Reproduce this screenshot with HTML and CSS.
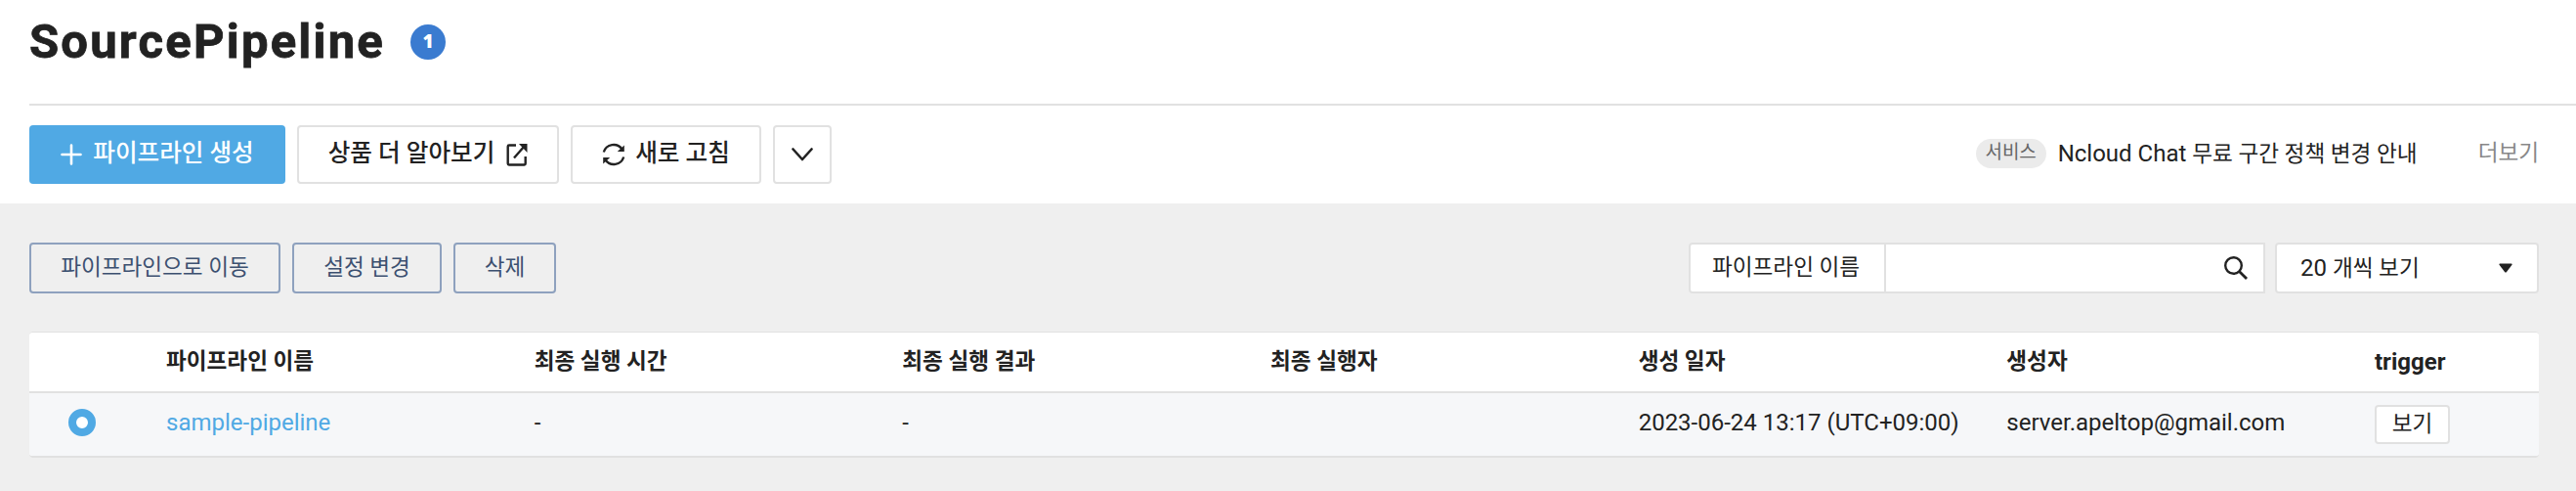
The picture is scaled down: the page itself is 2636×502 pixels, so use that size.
FILE: index.html
```html
<!DOCTYPE html>
<html lang="ko">
<head>
<meta charset="utf-8">
<title>SourcePipeline</title>
<link rel="stylesheet" href="styles.css">
</head>
<body>
<header class="header">
  <div class="title-row">
    <h1 class="title">SourcePipeline</h1>
    <span class="count">1</span>
  </div>
  <div class="toolbar">
    <button class="btn btn-primary"><svg width="22" height="22" viewBox="0 0 22 22"><path d="M11 1.500v19M1.500 11h19" stroke="currentColor" stroke-width="2.600" stroke-linecap="round"/></svg><span>파이프라인 생성</span></button>
    <button class="btn btn-learn"><span>상품 더 알아보기</span><svg width="22" height="24" viewBox="0 0 22 24" fill="none" stroke="currentColor" stroke-width="2.400"><path d="M10 2.500H3Q1.700 2.500 1.700 3.700V21.300q0 1.200 1.200 1.200H18.500q1.200 0 1.200-1.200V14M8 15.500L19 3"/><path d="M13 1h8.500v9z" fill="currentColor" stroke="none"/></svg></button>
    <button class="btn btn-refresh"><svg width="24" height="26" viewBox="0 0 24 26" fill="none" stroke="currentColor" stroke-width="2.400"><path d="M1.800 10.500A10.500 10.500 0 0 1 20.500 7.500M22.200 15.500A10.500 10.500 0 0 1 3.500 18.500"/><path d="M22.800 3.500v6.500h-7zM1.200 22.500V16h7z" fill="currentColor" stroke="none"/></svg><span>새로 고침</span></button>
    <button class="btn btn-more" aria-label="more"><svg width="22" height="14" viewBox="0 0 22 14" fill="none" stroke="currentColor" stroke-width="2.600"><path d="M1.500 1.500L11 12L20.500 1.500" stroke-linejoin="round" stroke-linecap="round"/></svg></button>
    <div class="notice">
      <span class="tag">서비스</span>
      <span class="notice-text">Ncloud Chat <span class="ko">무료 구간 정책 변경 안내</span></span>
      <a class="notice-more ko">더보기</a>
    </div>
  </div>
</header>
<main class="content">
  <div class="filters">
    <button class="action action-move ko">파이프라인으로 이동</button>
    <button class="action action-edit ko">설정 변경</button>
    <button class="action action-delete ko">삭제</button>
    <div class="search">
      <span class="search-label ko">파이프라인 이름</span>
      <span class="search-field"><svg width="24" height="24" viewBox="0 0 24 24" fill="none" stroke="currentColor" stroke-width="2.400"><circle cx="9.500" cy="9.500" r="8.300"/><path d="M15.200 15.200L23 23" stroke-width="2.800"/></svg></span>
    </div>
    <div class="select"><span>20 <span class="ko">개씩 보기</span></span><svg width="14" height="10" viewBox="0 0 14 10"><path d="M1 .5h12q1 .2.500 1.200L8 9q-1 1-2 0L.5 1.700Q0 .7 1 .5z" fill="currentColor"/></svg></div>
  </div>
  <div class="table">
    <div class="row head ko">
      <span></span><span>파이프라인 이름</span><span>최종 실행 시간</span><span>최종 실행 결과</span><span>최종 실행자</span><span>생성 일자</span><span>생성자</span><span class="latin">trigger</span>
    </div>
    <div class="row item">
      <span class="radio"></span><a class="cell link">sample-pipeline</a><span class="cell">-</span><span class="cell">-</span><span class="cell"></span><span class="cell">2023-06-24 13:17 (UTC+09:00)</span><span class="cell">server.apeltop@gmail.com</span><span><button class="view ko">보기</button></span>
    </div>
  </div>
</main>
</body>
</html>
```
FILE: styles.css
```css
* { box-sizing: border-box; }
body {
  margin: 0;
  min-height: 502px;
  background: #efefef;
  color: #222;
  font: 24px/1 Roboto, "Noto Sans CJK KR", sans-serif;
}
button {
  font: inherit;
  color: inherit;
  padding: 0;
  white-space: nowrap;
}
svg { display: block; flex: none; }
.ko { font-size: 22.6px; }
.latin { font-size: 24px; }

.header { height: 208px; padding: 0 0 0 30px; background: #fff; }
.title-row {
  display: flex;
  align-items: center;
  height: 108px;
  padding-bottom: 20px;
  border-bottom: 2px solid #e1e1e1;
}
.title {
  width: 390px;
  margin: 0;
  padding-bottom: 1px;
  font-size: 49px;
  font-weight: 700;
  letter-spacing: 2.200px;
  -webkit-text-stroke: .8px currentColor;
}
.count {
  width: 36px;
  height: 36px;
  border-radius: 50%;
  background: #3a7bd0;
  color: #fff;
  font: 800 19px/35px "Open Sans", sans-serif;
  text-align: center;
}
.toolbar { display: flex; gap: 12px; padding: 20px 38px 0 0; }
.btn {
  display: flex;
  align-items: center;
  justify-content: center;
  height: 60px;
  border: 2px solid #e1e1e1;
  border-radius: 4px;
  background: #fff;
  font-size: 24.6px;
  font-weight: 500;
}
.btn span { padding-bottom: 2px; }
.btn-primary { width: 262px; gap: 11px; border: 0; background: #50a9e4; color: #fff; }
.btn-learn { width: 268px; gap: 12px; }
.btn-refresh { width: 195px; gap: 10px; }
.btn-more { width: 60px; }
.notice { display: flex; align-items: center; height: 60px; margin-left: auto; }
.tag {
  width: 72px;
  height: 30px;
  margin: 0 12px 2px 0;
  border-radius: 15px;
  background: #ebebeb;
  color: #666;
  font-size: 19px;
  line-height: 27px;
  text-align: center;
}
.notice-text { width: 430px; padding-bottom: 2px; white-space: nowrap; }
.notice-more { padding-bottom: 2px; color: #888; white-space: nowrap; }

.content { padding: 40px 38px 0 30px; }
.filters { display: flex; gap: 12px; height: 52px; }
.action {
  border: 2px solid #8ea1be;
  border-radius: 4px;
  background: transparent;
  color: #3c5070;
}
.action-move { width: 257px; }
.action-edit { width: 153px; }
.action-delete { width: 105px; }
.search {
  display: flex;
  width: 590px;
  margin-left: auto;
  margin-right: -2px;
  border: 2px solid #e1e1e1;
  border-radius: 4px 0 0 4px;
  background: #fff;
}
.search-label { width: 200px; padding-left: 22px; line-height: 47px; border-right: 2px solid #e1e1e1; }
.search-field { display: flex; flex: 1; align-items: center; justify-content: flex-end; padding-right: 16px; }
.select {
  display: flex;
  align-items: center;
  justify-content: space-between;
  width: 270px;
  padding: 0 25px 0 24px;
  border: 2px solid #e1e1e1;
  border-radius: 4px;
  background: #fff;
}

.table {
  margin-top: 39px;
  border: solid #e1e1e1;
  border-width: 1px 0 2px;
  border-radius: 4px;
  overflow: hidden;
}
.row {
  display: grid;
  grid-template-columns: 110px repeat(6, 1fr) 198px;
  align-items: center;
}
.row > :nth-child(n+2) { padding-left: 30px; white-space: nowrap; }
.head { height: 62px; border-bottom: 2px solid #e1e1e1; background: #fff; font-weight: 700; }
.item { height: 64px; background: #f6f7f9; }
.cell { padding-bottom: 4px; }
.radio { width: 28px; height: 28px; margin: 0 0 4px 40px; border: 8px solid #50a9e4; border-radius: 50%; background: #fff; }
.link { color: #50a9e4; }
.view { display: block; width: 77px; height: 40px; border: 2px solid #e1e1e1; border-radius: 4px; background: #fff; }
```
